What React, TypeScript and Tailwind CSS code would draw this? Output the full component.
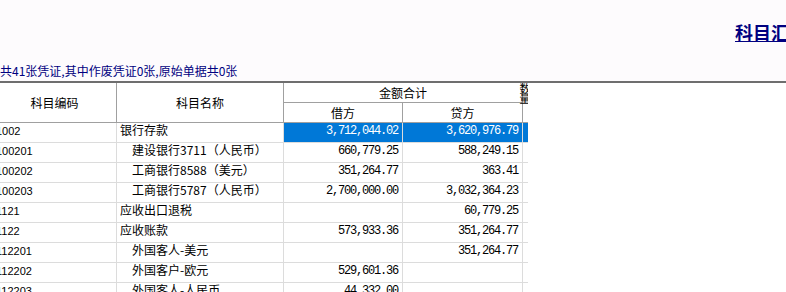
type Row = {
  code: string
  name: string
  sub?: boolean
  debit: string
  credit: string
  selected?: boolean
}

const rows: Row[] = [
  { code: "1002", name: "银行存款", debit: "3,712,044.02", credit: "3,620,976.79", selected: true },
  { code: "100201", name: "建设银行3711（人民币）", sub: true, debit: "660,779.25", credit: "588,249.15" },
  { code: "100202", name: "工商银行8588（美元）", sub: true, debit: "351,264.77", credit: "363.41" },
  { code: "100203", name: "工商银行5787（人民币）", sub: true, debit: "2,700,000.00", credit: "3,032,364.23" },
  { code: "1121", name: "应收出口退税", debit: "", credit: "60,779.25" },
  { code: "1122", name: "应收账款", debit: "573,933.36", credit: "351,264.77" },
  { code: "112201", name: "外国客人-美元", sub: true, debit: "", credit: "351,264.77" },
  { code: "112202", name: "外国客户-欧元", sub: true, debit: "529,601.36", credit: "" },
  { code: "112203", name: "外国客人-人民币", sub: true, debit: "44,332.00", credit: "" },
]

const mono = "font-['Liberation_Mono',monospace] text-[12px] tracking-[-1.2px] leading-[16px]"

export default function App() {
  return (
    <div className="w-[786px] h-[292px] overflow-hidden bg-white text-black font-['Noto_Sans_CJK_SC',sans-serif]">
      {/* page title + summary */}
      <div className="w-[1560px] h-[81px] bg-[#fdfbfd] flex flex-col">
        <div className="mt-[20px] h-[24px] text-center">
          <span className="text-[18px] leading-[24px] font-bold underline text-[#000080]">科目汇总表</span>
        </div>
        <div className="mt-[19px] h-[16px] text-[12px] leading-[16px] text-[#000080]">
          共41张凭证,其中作废凭证0张,原始单据共0张
        </div>
      </div>
      <div className="w-[1560px] h-[2px] bg-[#6e6e6e]" />

      <div className="-ml-[7px] w-[535px] overflow-hidden text-[12px]">
        {/* header */}
        <div className="flex h-[40px] border-b border-[#a0a0a0]">
          <div className="w-[124px] shrink-0 border-r border-[#a0a0a0] flex items-center justify-center">科目编码</div>
          <div className="w-[167px] shrink-0 border-r border-[#a0a0a0] flex items-center justify-center">科目名称</div>
          <div className="w-[239px] shrink-0 border-r border-[#a0a0a0] flex flex-col">
            <div className="h-[20px] border-b border-[#a0a0a0] flex items-center justify-center">金额合计</div>
            <div className="flex flex-1">
              <div className="w-[119px] shrink-0 border-r border-[#a0a0a0] flex items-center justify-center">借方</div>
              <div className="flex-1 flex items-center justify-center">贷方</div>
            </div>
          </div>
          <div className="w-[5px] shrink-0 flex flex-col items-center text-[11px] leading-[10px]">
            <span className="w-[12px] shrink-0">数</span>
            <span className="w-[12px] shrink-0">量</span>
          </div>
        </div>

        {/* data rows */}
        {rows.map((r) => {
          const sel = r.selected ? "bg-[#0078d7] text-white" : ""
          return (
            <div key={r.code} className="flex h-[20px] border-b border-[#dcdcdc]">
              <div className="w-[124px] shrink-0 border-r border-[#dcdcdc] pl-[3px] font-['Liberation_Sans',sans-serif] text-[11px] leading-[16px] whitespace-nowrap">
                {r.code}
              </div>
              <div className={`w-[167px] shrink-0 border-r border-[#dcdcdc] leading-[14px] whitespace-nowrap overflow-hidden ${r.sub ? "pl-[15px]" : "pl-[3px]"}`}>
                {r.name}
              </div>
              <div className={`w-[119px] shrink-0 border-r border-[#dcdcdc] pr-[4px] text-right ${mono} ${sel}`}>
                {r.debit}
              </div>
              <div className={`w-[120px] shrink-0 border-r border-[#dcdcdc] pr-[4px] text-right ${mono} ${sel}`}>
                {r.credit}
              </div>
              <div className={`w-[5px] shrink-0 ${sel}`} />
            </div>
          )
        })}
      </div>
    </div>
  )
}
